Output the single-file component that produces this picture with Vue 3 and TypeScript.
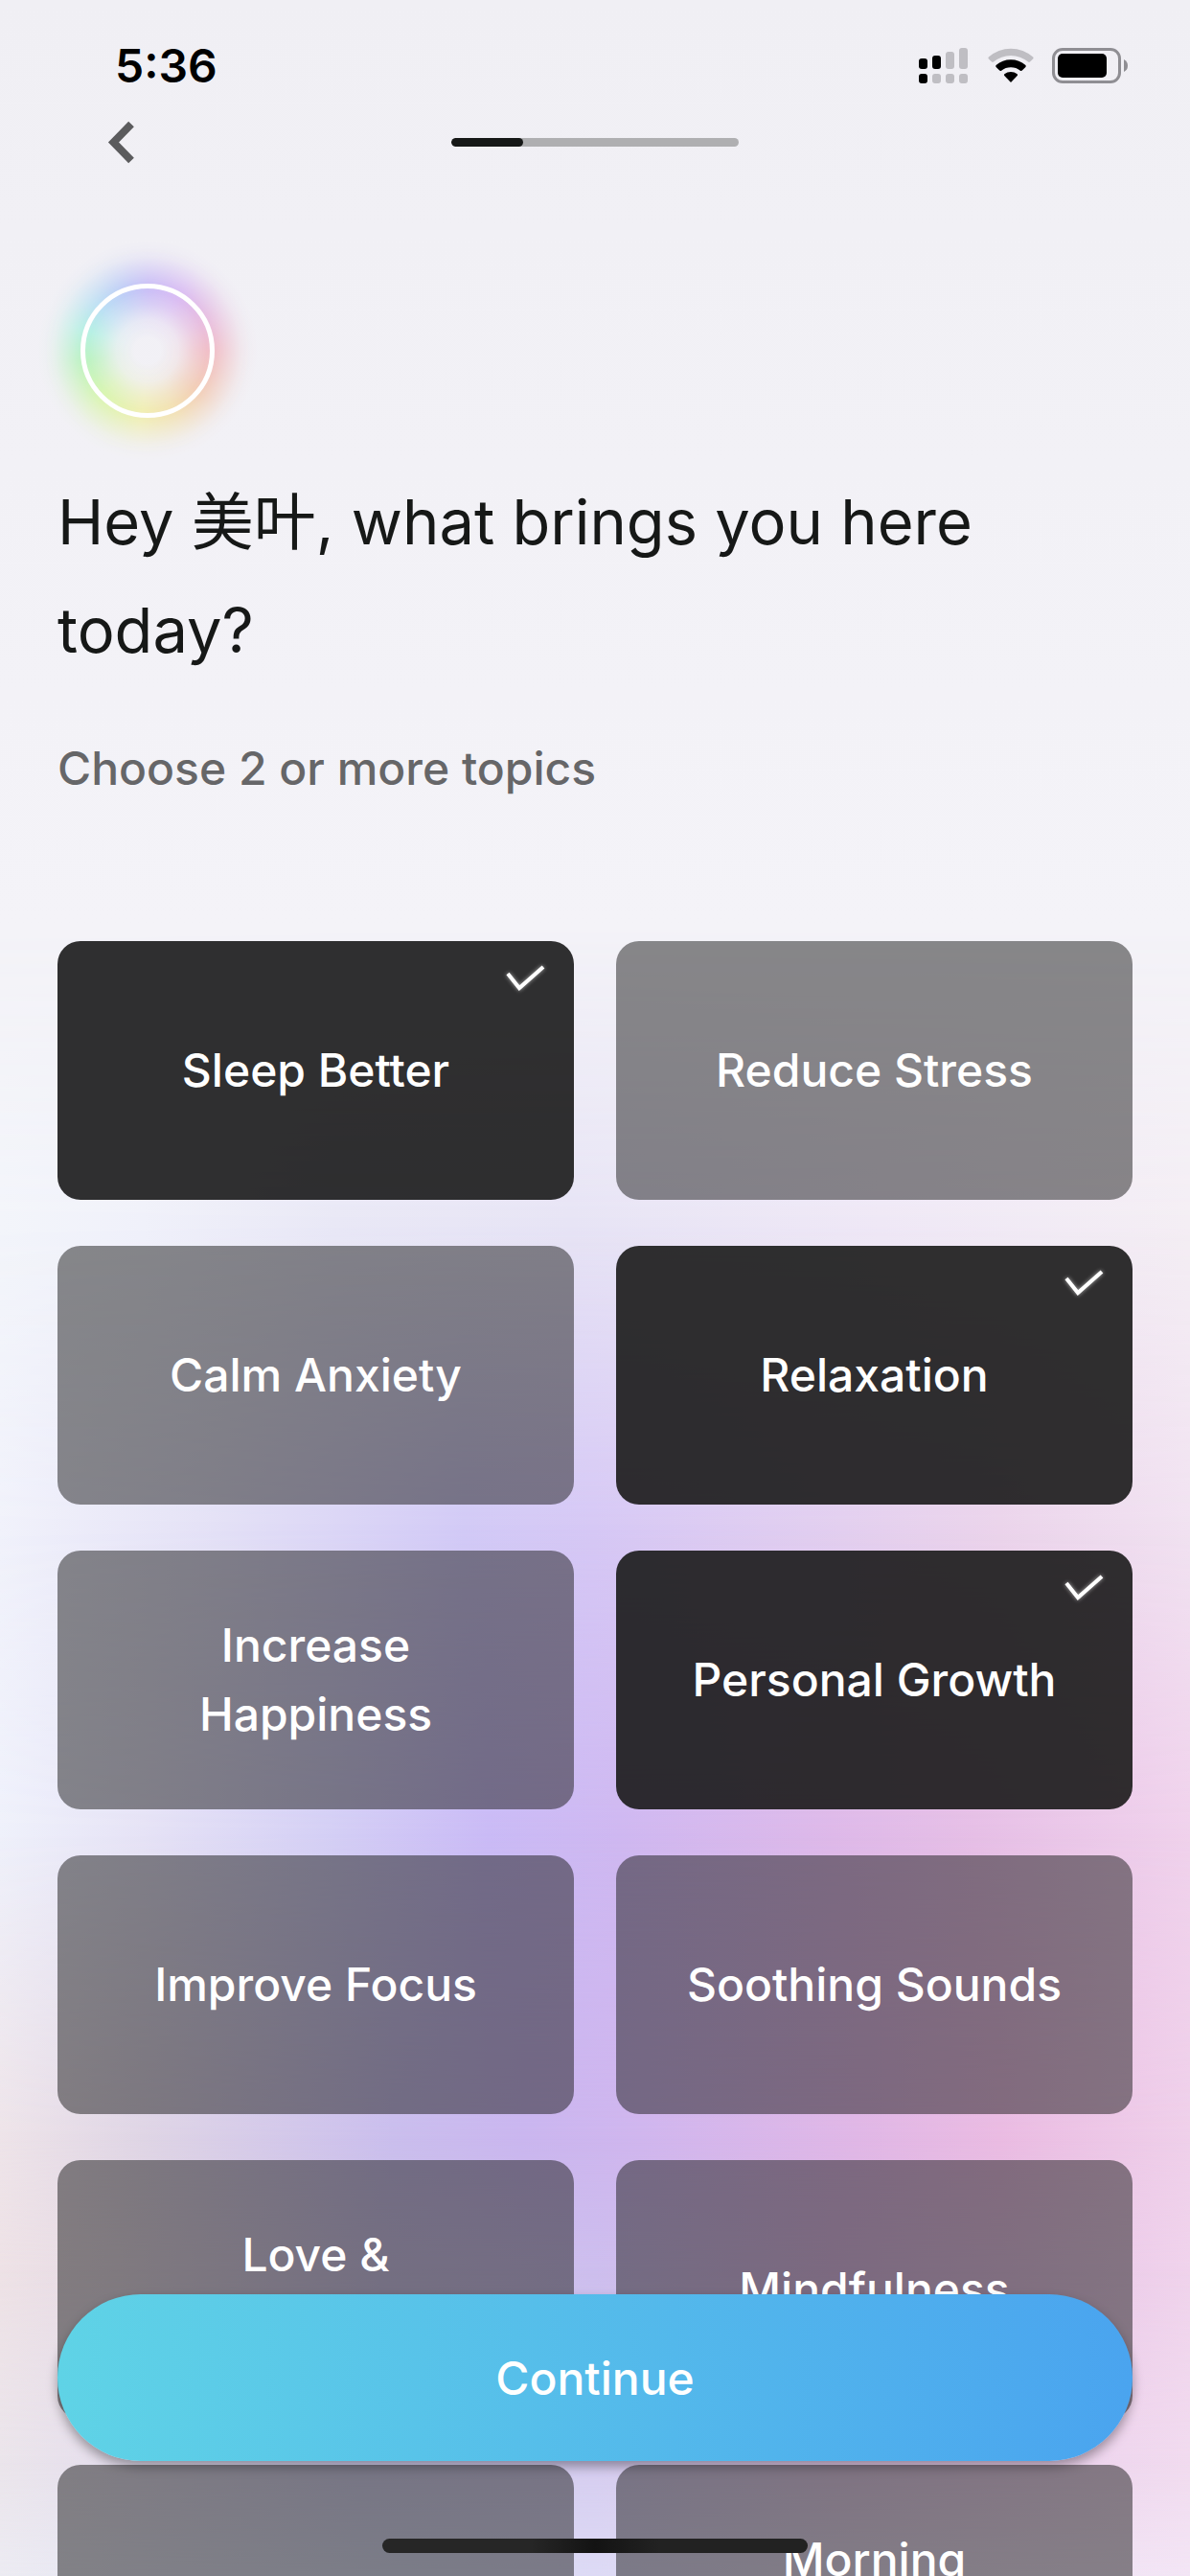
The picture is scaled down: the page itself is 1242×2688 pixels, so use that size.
<script setup lang="ts">
import { ref } from 'vue'

interface Topic {
  id: string
  label: string
  selected: boolean
}

const userName = '美叶'
const step = 1
const stepCount = 4

const topics = ref<Topic[]>([
  { id: 'sleep', label: 'Sleep Better', selected: true },
  { id: 'stress', label: 'Reduce Stress', selected: false },
  { id: 'anxiety', label: 'Calm Anxiety', selected: false },
  { id: 'relaxation', label: 'Relaxation', selected: true },
  { id: 'happiness', label: 'Increase Happiness', selected: false },
  { id: 'growth', label: 'Personal Growth', selected: true },
  { id: 'focus', label: 'Improve Focus', selected: false },
  { id: 'sounds', label: 'Soothing Sounds', selected: false },
  { id: 'love', label: 'Love & Compassion', selected: false },
  { id: 'mindfulness', label: 'Mindfulness', selected: false },
  { id: 'energy', label: 'Energy', selected: false },
  { id: 'morning', label: 'Morning Motivation', selected: false },
])
</script>

<template>
  <div class="screen">
    <div class="aurora" aria-hidden="true">
      <div class="band band-1"></div>
      <div class="band band-2"></div>
      <div class="band band-3"></div>
      <div class="band band-4"></div>
      <div class="band band-5"></div>
      <div class="band band-6"></div>
      <div class="band band-7"></div>
    </div>

    <div class="status">
      <time class="clock">5:36</time>
      <div class="indicators">
        <svg width="51" height="37" viewBox="0 0 51 37" aria-label="Signal">
          <g fill="#000">
            <rect x="0" y="11" width="9" height="11" rx="3" />
            <rect x="14" y="8" width="9" height="14" rx="3" />
            <rect x="0" y="27" width="9" height="10" rx="3" />
          </g>
          <g fill="#bfbec3">
            <rect x="28" y="4" width="9" height="18" rx="3" />
            <rect x="42" y="0" width="9" height="22" rx="3" />
            <rect x="14" y="27" width="9" height="10" rx="3" />
            <rect x="28" y="27" width="9" height="10" rx="3" />
            <rect x="42" y="27" width="9" height="10" rx="3" />
          </g>
        </svg>
        <svg class="wifi" width="48" height="37" viewBox="0 0 48 37" aria-label="Wi-Fi">
          <path d="M0.8 9.6 Q0 10.6 0.9 11.5 L4 14.5 Q5 15.4 6 14.6 A28 28 0 0 1 42 14.6 Q43 15.4 44 14.5 L47.100 11.500 Q48 10.600 47.200 9.600 A34.500 34.500 0 0 0 0.800 9.600 Z" fill="#bfbec3" />
          <path d="M8.600 18 Q7.800 19 8.600 19.900 L12.200 23.600 Q13.100 24.500 14.100 23.700 A16 16 0 0 1 33.900 23.700 Q34.900 24.500 35.800 23.600 L39.400 19.900 Q40.200 19 39.400 18 A23.500 23.500 0 0 0 8.600 18 Z" fill="#000" />
          <path d="M17.300 27.200 Q16.500 28.200 17.300 29.100 L24 36 L30.700 29.100 Q31.500 28.200 30.700 27.200 A11 11 0 0 0 17.300 27.200 Z" fill="#000" />
        </svg>
        <svg width="80" height="37" viewBox="0 0 80 37" aria-label="Battery">
          <rect x="1.500" y="1.500" width="69" height="34" rx="9.500" fill="none" stroke="#8f8e93" stroke-width="3" />
          <rect x="6" y="6" width="51" height="25" rx="5" fill="#000" />
          <path d="M75 12 Q79 14 79 18.500 Q79 23 75 25 Z" fill="#8f8e93" />
        </svg>
      </div>
    </div>

    <header class="nav">
      <button class="back" type="button" aria-label="Back">
        <svg width="30" height="48" viewBox="0 0 30 48">
          <path d="M25 5.500 L6.500 24.500 L25 43.500" fill="none" stroke="#5b5b5d" stroke-width="8" />
        </svg>
      </button>
      <progress class="progress" :value="step" :max="stepCount" aria-label="Setup progress"></progress>
    </header>

    <main class="content">
      <div class="orb" aria-hidden="true"></div>
      <h1 class="title">Hey {{ userName }}, what brings you here today?</h1>
      <p class="subtitle">Choose 2 or more topics</p>

      <div class="topics">
        <label v-for="topic in topics" :key="topic.id" class="topic" :class="{ selected: topic.selected }">
          <input v-model="topic.selected" class="tick" type="checkbox" />
          <svg v-if="topic.selected" class="check" width="48" height="36" viewBox="0 0 48 36">
            <path d="M6 14 L18 29 L43 7" fill="none" stroke="#fff" stroke-width="4" />
          </svg>
          <span class="topic-label">{{ topic.label }}</span>
        </label>
      </div>
    </main>

    <button class="continue" type="button">Continue</button>
    <div class="home-bar" aria-hidden="true"></div>
  </div>
</template>

<style>
body {
  background: #f2f1f7;
}
</style>

<style scoped>
.screen {
  position: relative;
  height: 100vh;
  overflow: hidden;
  font-family: Inter, 'Noto Sans CJK SC', 'Liberation Sans', sans-serif;
  color: #161817;
}

/* Backdrop: horizontal colour bands, each fading in over the one above */
.aurora,
.band {
  position: absolute;
  inset: 0;
}

.aurora {
  z-index: -1;
  background: linear-gradient(#f0eff4, #f4f3f8 36%);
}

.band-1 {
  background: linear-gradient(90deg, #f3f5fa, #f0f1fa 12%, #e9e8f6 28%, #e7e4f5 48%, #efe8f6 74%, #f4eef4);
  mask-image: linear-gradient(transparent 36%, #000 47.5%);
}

.band-2 {
  background: linear-gradient(90deg, #f1f2fb, #e4e1f6 18%, #d2caf6 39%, #d6c8f5 50%, #e1cef0 68%, #ebd4eb 84%, #f1e2f1);
  mask-image: linear-gradient(transparent 47.5%, #000 59.3%);
}

.band-3 {
  background: linear-gradient(90deg, #eff1fb, #e6e3f6 12%, #d4cff5 28%, #cabbf6 41%, #cfb8f1 52%, #deb9e9 70%, #e6bfe6 82%, #f0d2ec);
  mask-image: linear-gradient(transparent 59.3%, #000 71.1%);
}

.band-4 {
  background: linear-gradient(90deg, #eee4e9, #dfd5e5 12%, #cabeed 33%, #cab6ef 44%, #d0b6ee 54%, #e0b7e6 72%, #eabbe2 84%, #efd0ea);
  mask-image: linear-gradient(transparent 71.1%, #000 83%);
}

.band-5 {
  background: linear-gradient(90deg, #eee2e6, #e6dae5 10%, #cfc4ea 32%, #cdbeee 50%, #deb9e6 70%, #e6c2e6 84%, #f0d3ec);
  mask-image: linear-gradient(transparent 83%, #000 88%);
}

.band-6 {
  background: linear-gradient(90deg, #ebe5eb, #e5deed 10%, #d4d0ef 30%, #d6cdf0 50%, #e4cbea 70%, #ebd0ec 84%, #f1dbef);
  mask-image: linear-gradient(transparent 88%, #000 95.5%);
}

.band-7 {
  background: linear-gradient(90deg, #ecebf2, #e6e6f4 12%, #dcdff5 34%, #dddaf5 50%, #eadff2 72%, #f3e5f5);
  mask-image: linear-gradient(transparent 95.5%, #000 100%);
}

.status {
  display: flex;
  align-items: center;
  justify-content: space-between;
  height: 104px;
  padding: 16px 64px 0 120px;
}

.clock {
  font-size: 48px;
  font-weight: 600;
  color: #000;
}

.indicators {
  display: flex;
  align-items: center;
}

.indicators svg {
  display: block;
}

.wifi {
  margin: 0 19px 0 21px;
}

.nav {
  display: grid;
  grid-template-columns: 1fr auto 1fr;
  align-items: center;
  height: 56px;
  padding: 0 60px;
}

.back {
  justify-self: start;
  padding: 0 52px;
  border: 0;
  background: none;
}

.back svg {
  display: block;
}

.progress {
  display: block;
  width: 300px;
  height: 9px;
  border: 0;
  border-radius: 5px;
  background: #afafb1;
  appearance: none;
  overflow: hidden;
}

.progress::-webkit-progress-bar {
  background: #afafb1;
}

.progress::-webkit-progress-value {
  border-radius: 5px;
  background: #161817;
}

.content {
  padding: 120px 60px 0;
}

.orb {
  position: relative;
  box-sizing: border-box;
  width: 140px;
  height: 140px;
  margin-left: 24px;
  border: 5px solid #fff;
  border-radius: 50%;
}

.orb::before {
  content: '';
  position: absolute;
  z-index: -1;
  inset: -50px;
  border-radius: 50%;
  background: conic-gradient(#c8bdf6, #d8b9f2 30deg, #e8bbdc 65deg, #f0bcc5 90deg, #f2cdb3 130deg, #f2dfb0 155deg, #f0eeb0 185deg, #d8f5ae 225deg, #b9f2c0 262deg, #b3f0e2 288deg, #b8dff3 312deg, #bccbf6 338deg, #c8bdf6);
  mask-image: radial-gradient(closest-side, transparent 12%, rgb(0 0 0 / 20%) 28%, rgb(0 0 0 / 65%) 42%, rgb(0 0 0 / 95%) 54%, rgb(0 0 0 / 85%) 63%, rgb(0 0 0 / 50%) 74%, rgb(0 0 0 / 17%) 85%, rgb(0 0 0 / 4%) 93%, transparent 100%);
}

.title {
  margin: 52px 0 0;
  font-size: 65px;
  font-weight: 400;
  line-height: 113px;
}

.subtitle {
  margin: 52px 0 0;
  font-size: 48px;
  font-weight: 500;
  line-height: 72px;
  color: #666668;
}

.topics {
  display: grid;
  grid-template-columns: 1fr 1fr;
  gap: 48px 44px;
  margin-top: 144px;
}

.topic {
  position: relative;
  display: flex;
  align-items: center;
  justify-content: center;
  box-sizing: border-box;
  height: 270px;
  padding: 0 56px;
  border-radius: 24px;
  background: rgb(25 25 25 / 50%);
  color: #fff;
  font-size: 48px;
  font-weight: 500;
  line-height: 72px;
  text-align: center;
}

.topic.selected {
  background: rgb(26 26 26 / 90%);
}

.tick {
  position: absolute;
  inset: 0;
  margin: 0;
  appearance: none;
}

.check {
  position: absolute;
  top: 20px;
  right: 27px;
  filter: drop-shadow(0 0 2px rgb(255 255 255 / 60%));
}

.continue {
  position: absolute;
  right: 60px;
  bottom: 120px;
  left: 60px;
  height: 174px;
  border: 0;
  border-radius: 87px;
  background: linear-gradient(90deg, #5fd3e6, #4aa4ef);
  box-shadow: 0 6px 12px rgb(0 0 0 / 35%);
  color: #fff;
  font-family: inherit;
  font-size: 48px;
  font-weight: 500;
}

.home-bar {
  position: absolute;
  right: 0;
  bottom: 24px;
  left: 0;
  width: 444px;
  height: 15px;
  margin: 0 auto;
  border-radius: 8px;
  background: linear-gradient(90deg, #262626 35%, #131313 50%, #222 65%);
}
</style>
